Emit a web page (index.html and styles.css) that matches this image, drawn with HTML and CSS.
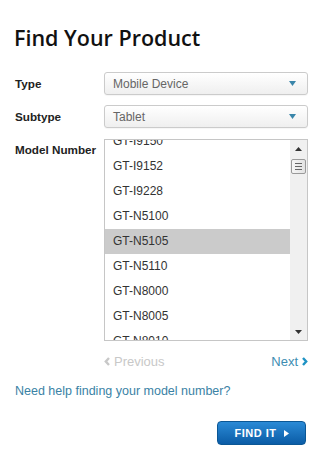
FILE: index.html
```html
<!DOCTYPE html>
<html lang="en">
<head>
<meta charset="utf-8">
<title>Find Your Product</title>
<link rel="stylesheet" href="styles.css">
</head>
<body>
<main class="finder">
  <h1 class="title">Find Your Product</h1>
  <div class="form">
    <span class="label">Type</span>
    <div class="select">
      <span class="value">Mobile Device</span>
      <svg class="caret" width="7" height="5" viewBox="0 0 7 5"><path d="M0 0H7L3.5 5Z" fill="#3a86aa"/></svg>
    </div>
    <span class="label">Subtype</span>
    <div class="select">
      <span class="value">Tablet</span>
      <svg class="caret" width="7" height="5" viewBox="0 0 7 5"><path d="M0 0H7L3.5 5Z" fill="#3a86aa"/></svg>
    </div>
    <span class="label">Model Number</span>
    <div class="listbox">
      <ul class="options">
        <li>GT-I9150</li>
        <li>GT-I9152</li>
        <li>GT-I9228</li>
        <li>GT-N5100</li>
        <li class="selected">GT-N5105</li>
        <li>GT-N5110</li>
        <li>GT-N8000</li>
        <li>GT-N8005</li>
        <li>GT-N8010</li>
      </ul>
      <div class="scrollbar">
        <div class="sb-btn"><svg width="7" height="4" viewBox="0 0 7 4"><path d="M0 4H7L3.5 0Z" fill="#333"/></svg></div>
        <div class="track">
          <div class="thumb"><span></span><span></span><span></span></div>
        </div>
        <div class="sb-btn"><svg width="7" height="4" viewBox="0 0 7 4"><path d="M0 0H7L3.5 4Z" fill="#333"/></svg></div>
      </div>
    </div>
    <span></span>
    <nav class="pager">
      <a class="prev"><svg width="6" height="9" viewBox="0 0 6 9"><path d="M5 1L1.8 4.5L5 8" fill="none" stroke="#c8c8c8" stroke-width="2.4"/></svg>Previous</a>
      <a class="next">Next<svg width="6" height="9" viewBox="0 0 6 9"><path d="M1 1L4.2 4.5L1 8" fill="none" stroke="#1f93c4" stroke-width="2.4"/></svg></a>
    </nav>
  </div>
  <a class="help">Need help finding your model number?</a>
  <div class="actions">
    <button class="find">FIND IT<svg width="5" height="7" viewBox="0 0 5 7"><path d="M0 0L5 3.5L0 7Z" fill="#fff"/></svg></button>
  </div>
</main>
</body>
</html>
```

FILE: styles.css
```css
* { box-sizing: border-box; }

body {
  margin: 0;
  background: #fff;
  font-family: "Liberation Sans", Arial, sans-serif;
  color: #222;
}

.finder {
  padding: 24px 0 0 15px;
  width: 308px;
}

.title {
  margin: 0 0 20px -1px;
  font-family: "Open Sans", "Liberation Sans", sans-serif;
  font-weight: 600;
  font-size: 21.5px;
  line-height: 28px;
  color: #111;
}

.form {
  display: grid;
  grid-template-columns: 89px 204px;
  row-gap: 10px;
}

.label {
  font-weight: bold;
  font-size: 11.7px;
  line-height: 23px;
  color: #222;
}

.select {
  height: 23px;
  border: 1px solid #cbcbcb;
  border-radius: 3px;
  background: linear-gradient(#ffffff, #efefef);
  box-shadow: 0 1px 1px rgba(0,0,0,0.04);
  display: flex;
  align-items: center;
  justify-content: space-between;
  padding: 0 11px 0 8px;
  font-size: 12px;
  color: #666;
}

.caret { display: block; }

.listbox {
  margin-top: 1px;
  height: 202px;
  border: 1px solid #c6c6c6;
  display: flex;
  background: #fff;
}

.options {
  flex: 1;
  margin: 0;
  padding: 0;
  list-style: none;
  overflow: hidden;
}

.options li {
  height: 25px;
  line-height: 25px;
  padding-left: 8px;
  font-size: 12px;
  color: #333;
}

.options li:first-child { margin-top: -11px; }

.options li.selected { background: #cbcbcb; }

.scrollbar {
  width: 17px;
  background: #f0f0f0;
  display: flex;
  flex-direction: column;
}

.sb-btn {
  height: 17px;
  display: flex;
  align-items: center;
  justify-content: center;
}

.track {
  flex: 1;
  padding: 2px 1px 0;
}

.thumb {
  height: 15px;
  border: 1px solid #9a9a9a;
  border-radius: 2px;
  background: linear-gradient(90deg, #f6f6f6, #e2e2e2);
  display: flex;
  flex-direction: column;
  justify-content: center;
  align-items: center;
  gap: 2px;
}

.thumb span {
  width: 7px;
  height: 1px;
  background: #666;
}

.pager {
  margin-top: 2px;
  display: flex;
  justify-content: space-between;
  font-size: 13px;
  line-height: 17px;
}

.pager a {
  display: flex;
  align-items: center;
  gap: 4px;
}

.prev { color: #c8c8c8; }
.next { color: #3d8db2; }

.help {
  display: block;
  margin-top: 13px;
  font-size: 12.5px;
  line-height: 17px;
  color: #3a82a5;
}

.actions {
  margin-top: 21px;
  display: flex;
  justify-content: flex-end;
  padding-right: 2px;
}

.find {
  width: 89px;
  height: 24px;
  border: 1px solid #0b5795;
  border-radius: 4px;
  background: linear-gradient(#2a8ad6, #0b5ca6);
  color: #fff;
  font-family: "Liberation Sans", Arial, sans-serif;
  font-weight: bold;
  font-size: 11px;
  letter-spacing: 0.5px;
  display: flex;
  align-items: center;
  justify-content: center;
  gap: 7px;
  padding: 0;
}
```
